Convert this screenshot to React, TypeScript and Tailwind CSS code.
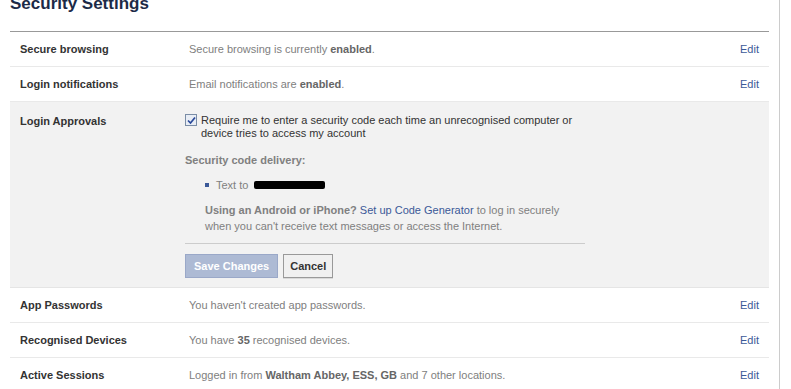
import React from "react";

type Row = {
    label: string;
    value: React.ReactNode;
};

const font = { fontFamily: "'Liberation Sans', Arial, sans-serif" };

function SettingRow({ label, value }: Row) {
    return (
        <div className="flex items-center h-[35px] border-b border-[#e9e9e9]">
            <div className="w-[179px] pl-[10px] font-bold text-[#333]">{label}</div>
            <div className="flex-1 text-[#808080]">{value}</div>
            <a className="pr-[10px] text-[#3b5998]">Edit</a>
        </div>
    );
}

export default function App() {
    return (
        <div className="relative w-[791px] h-[389px] overflow-hidden bg-white text-[11px] leading-[14px]" style={font}>
            <div className="absolute top-0 bottom-0 left-[779px] w-px bg-[#ccc]" />
            <h1 className="pl-[10px] -mt-[6px] h-[37px] text-[17px] leading-[20px] font-bold text-[#1c2a47]">Security Settings</h1>
            <div className="ml-[10px] w-[759px] border-t border-[#999]">
                <SettingRow
                    label="Secure browsing"
                    value={<>Secure browsing is currently <b className="text-[#666]">enabled</b>.</>}
                />
                <SettingRow
                    label="Login notifications"
                    value={<>Email notifications are <b className="text-[#666]">enabled</b>.</>}
                />

                {/* Login approvals, expanded */}
                <div className="flex bg-[#f2f2f2] border-b border-[#e5e5e5] pt-[11px] pb-[9px]">
                    <div className="w-[175px] pl-[10px] pt-[1px] font-bold text-[#333]">Login Approvals</div>
                    <div className="w-[400px]">
                        <div className="flex gap-[4px] text-[#333] leading-[13px]">
                            <span className="mt-[1px] w-[12px] h-[12px] shrink-0 border border-[#7a8da6] bg-[#e8edf5] flex items-center justify-center">
                                <svg width="9" height="9" viewBox="0 0 9 9">
                                    <path d="M1 4.5 L3.5 7 L8 1.5" stroke="#2a4a9a" strokeWidth="1.7" fill="none" />
                                </svg>
                            </span>
                            <span className="pt-[1px]">Require me to enter a security code each time an unrecognised computer or device tries to access my account</span>
                        </div>
                        <div className="mt-[13px] font-bold text-[#808080]">Security code delivery:</div>
                        <div className="mt-[11px] ml-[20px] flex items-center text-[#808080]">
                            <span className="w-[4px] h-[4px] bg-[#3b5998] mr-[7px]" />
                            Text to
                            <span className="ml-[6px] w-[71px] h-[8px] bg-black rounded-[2px]" />
                        </div>
                        <div className="mt-[10px] ml-[20px] text-[#808080] leading-[16px]">
                            <b className="text-[#808080]">Using an Android or iPhone?</b>{" "}
                            <a className="text-[#3b5998]">Set up Code Generator</a>{"  "}
                            to log in securely<br />when you can't receive text messages or access the Internet.
                        </div>
                        <div className="mt-[9px] border-t border-[#ccc]" />
                        <div className="mt-[10px] flex gap-[5px]">
                            <button className="h-[24px] px-[8px] border border-[#9aa8c8] bg-[#adbad4] text-white font-bold">Save Changes</button>
                            <button className="h-[24px] px-[6px] border border-[#999] bg-[#f0f0f0] text-[#333] font-bold shadow-[0_1px_0_rgba(0,0,0,0.1)]">Cancel</button>
                        </div>
                    </div>
                </div>

                <SettingRow label="App Passwords" value="You haven't created app passwords." />
                <SettingRow
                    label="Recognised Devices"
                    value={<>You have <b className="text-[#666]">35</b> recognised devices.</>}
                />
                <SettingRow
                    label="Active Sessions"
                    value={<>Logged in from <b className="text-[#666]">Waltham Abbey, ESS, GB</b> and 7 other locations.</>}
                />
            </div>
        </div>
    );
}
